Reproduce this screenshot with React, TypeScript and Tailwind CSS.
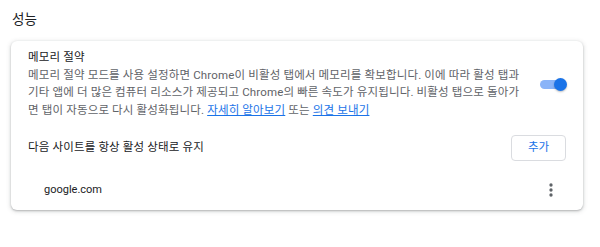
import React from 'react'

const font = { fontFamily: 'Roboto, "Noto Sans CJK KR", sans-serif' }

export default function App() {
  return (
    <div className="w-[600px] h-[247px] bg-white text-[#202124] overflow-hidden" style={font}>
      <h2 className="pl-3 pt-[9px] text-[13.5px] leading-[20px] text-[#202124]">성능</h2>

      <div className="mx-[11px] mt-[12px] w-[572px] rounded-[6px] bg-white shadow-[0_1px_2px_rgba(60,64,67,0.3),0_1px_4px_1px_rgba(60,64,67,0.15)]">
        <div className="flex items-center pl-[17px] pr-[16px] pt-[8px] pb-[12px]">
          <div className="flex-1 text-[11.5px] tracking-[0.15px] leading-[17.5px] whitespace-nowrap">
            <div className="text-[#202124]">메모리 절약</div>
            <div className="text-[#5f6368]">
              메모리 절약 모드를 사용 설정하면 Chrome이 비활성 탭에서 메모리를 확보합니다. 이에 따라 활성 탭과
              <br />
              기타 앱에 더 많은 컴퓨터 리소스가 제공되고 Chrome의 빠른 속도가 유지됩니다. 비활성 탭으로 돌아가
              <br />
              면 탭이 자동으로 다시 활성화됩니다.{' '}
              <a className="text-[#1a73e8] underline">자세히 알아보기</a> 또는{' '}
              <a className="text-[#1a73e8] underline">의견 보내기</a>
            </div>
          </div>
          <div className="relative w-[27px] h-[13px] flex items-center">
            <div className="w-[24px] h-[9px] rounded-full bg-[#8ab4f8]" />
            <div className="absolute right-0 w-[13px] h-[13px] rounded-full bg-[#1a73e8] shadow-[0_1px_2px_rgba(0,0,0,0.25)]" />
          </div>
        </div>

        <div className="flex items-center justify-between pl-[17px] pr-[17px] py-[4px]">
          <div className="text-[11.5px] tracking-[0.15px] text-[#202124]">다음 사이트를 항상 활성 상태로 유지</div>
          <button className="w-[55px] h-[26px] rounded-[4px] border border-[#dadce0] text-[11.5px] text-[#1a73e8] bg-white">
            추가
          </button>
        </div>

        <div className="flex items-center justify-between pl-[33px] pr-[22px] h-[45px] pt-[5px]">
          <div className="text-[11px] text-[#202124]">google.com</div>
          <svg width="20" height="20" viewBox="0 0 24 24" fill="#5f6368">
            <circle cx="12" cy="6" r="2" />
            <circle cx="12" cy="12" r="2" />
            <circle cx="12" cy="18" r="2" />
          </svg>
        </div>
      </div>
    </div>
  )
}
